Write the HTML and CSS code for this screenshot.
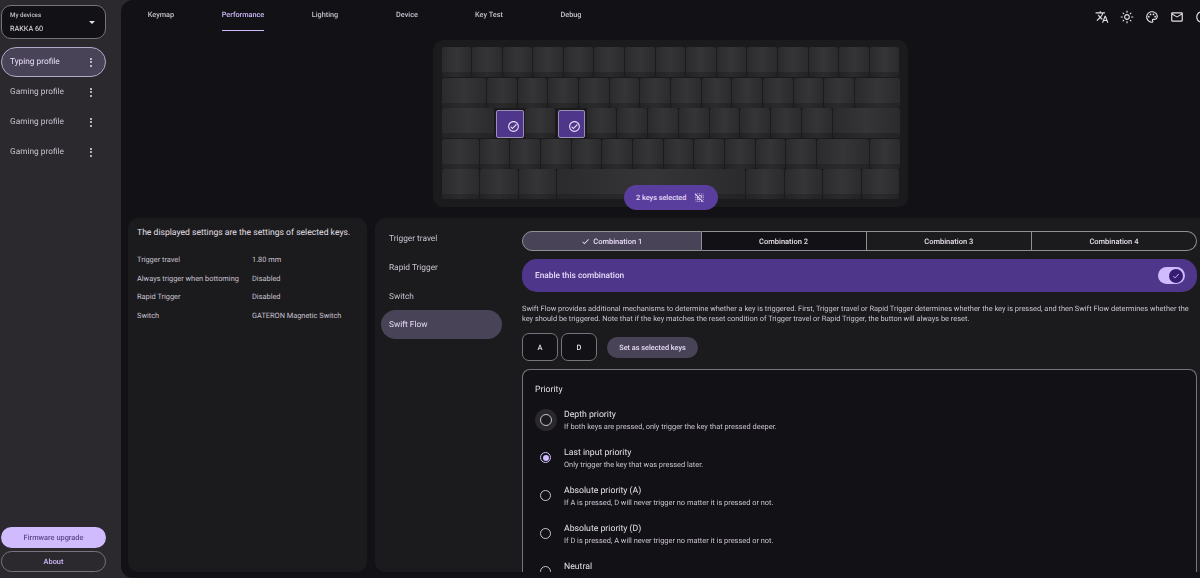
FILE: index.html
```html
<!DOCTYPE html>
<html>
    <head>
        <meta charset="utf-8">
        <title>Performance</title>
        <link rel="stylesheet" href="styles.css">
    </head>
    <body>
        <aside class="sidebar">
            <div class="device">
                <div>
                    <div class="device-label">My devices</div>
                    <div class="device-name">RAKKA 60</div>
                </div>
                <span class="caret"></span>
            </div>
            <ul class="profiles">
                <li class="profile active"><span>Typing profile</span><span class="dots"><i></i><i></i><i></i></span></li>
                <li class="profile"><span>Gaming profile</span><span class="dots"><i></i><i></i><i></i></span></li>
                <li class="profile"><span>Gaming profile</span><span class="dots"><i></i><i></i><i></i></span></li>
                <li class="profile"><span>Gaming profile</span><span class="dots"><i></i><i></i><i></i></span></li>
            </ul>
            <button class="btn-upgrade">Firmware upgrade</button>
            <button class="btn-about">About</button>
        </aside>

        <main class="main">
            <header class="topbar">
                <nav class="tabs">
                    <a class="tab"><span>Keymap</span></a>
                    <a class="tab active"><span>Performance</span></a>
                    <a class="tab"><span>Lighting</span></a>
                    <a class="tab"><span>Device</span></a>
                    <a class="tab"><span>Key Test</span></a>
                    <a class="tab"><span>Debug</span></a>
                </nav>
                <div class="top-icons">
                    <svg viewBox="0 0 24 24"><path d="M12.87 15.07l-2.54-2.51.03-.03c1.74-1.94 2.98-4.17 3.71-6.53H17V4h-7V2H8v2H1v1.99h11.17C11.5 7.92 10.44 9.75 9 11.35 8.07 10.32 7.3 9.19 6.69 8h-2c.73 1.63 1.73 3.17 2.98 4.56l-5.09 5.02L4 19l5-5 3.11 3.11.76-2.04zM18.5 10h-2L12 22h2l1.12-3h4.75L21 22h2l-4.5-12zm-2.62 7l1.62-4.33L19.12 17h-3.24z"/></svg>
                    <svg viewBox="0 0 24 24"><path d="M12 9c1.65 0 3 1.35 3 3s-1.35 3-3 3-3-1.35-3-3 1.35-3 3-3m0-2c-2.76 0-5 2.24-5 5s2.24 5 5 5 5-2.24 5-5-2.24-5-5-5zM2 13h2c.55 0 1-.45 1-1s-.45-1-1-1H2c-.55 0-1 .45-1 1s.45 1 1 1zm18 0h2c.55 0 1-.45 1-1s-.45-1-1-1h-2c-.55 0-1 .45-1 1s.45 1 1 1zM11 2v2c0 .55.45 1 1 1s1-.45 1-1V2c0-.55-.45-1-1-1s-1 .45-1 1zm0 18v2c0 .55.45 1 1 1s1-.45 1-1v-2c0-.55-.45-1-1-1s-1 .45-1 1zM5.99 4.58c-.39-.39-1.03-.39-1.41 0-.39.39-.39 1.03 0 1.41l1.06 1.06c.39.39 1.03.39 1.41 0s.39-1.03 0-1.41L5.99 4.58zm12.37 12.37c-.39-.39-1.03-.39-1.41 0-.39.39-.39 1.03 0 1.41l1.06 1.06c.39.39 1.03.39 1.41 0 .39-.39.39-1.03 0-1.41l-1.06-1.06zm1.06-10.96c.39-.39.39-1.03 0-1.41-.39-.39-1.03-.39-1.41 0l-1.06 1.06c-.39.39-.39 1.03 0 1.41s1.03.39 1.41 0l1.06-1.06zM7.05 18.36c.39-.39.39-1.03 0-1.41-.39-.39-1.03-.39-1.41 0l-1.06 1.06c-.39.39-.39 1.03 0 1.41s1.03.39 1.41 0l1.06-1.06z"/></svg>
                    <svg viewBox="0 0 24 24"><path d="M12 22C6.49 22 2 17.51 2 12S6.49 2 12 2s10 4.04 10 9c0 3.31-2.69 6-6 6h-1.77c-.28 0-.5.22-.5.5 0 .12.05.23.13.33.41.47.64 1.06.64 1.67 0 1.38-1.12 2.5-2.5 2.5zm0-18c-4.41 0-8 3.59-8 8s3.59 8 8 8c.28 0 .5-.22.5-.5 0-.16-.08-.28-.14-.35-.41-.46-.63-1.05-.63-1.65 0-1.38 1.12-2.5 2.5-2.5H16c2.21 0 4-1.79 4-4 0-3.86-3.59-7-8-7z"/><circle cx="6.5" cy="11.5" r="1.5"/><circle cx="9.5" cy="7.5" r="1.5"/><circle cx="14.5" cy="7.5" r="1.5"/><circle cx="17.5" cy="11.5" r="1.5"/></svg>
                    <svg viewBox="0 0 24 24"><path d="M22 6c0-1.1-.9-2-2-2H4c-1.1 0-2 .9-2 2v12c0 1.1.9 2 2 2h16c1.1 0 2-.9 2-2V6zm-2 0l-8 5-8-5h16zm0 12H4V8l8 5 8-5v10z"/></svg>
                    <svg viewBox="0 0 24 24"><path d="M12 2C6.48 2 2 6.48 2 12s4.48 10 10 10 10-4.48 10-10S17.52 2 12 2zm0 18c-4.41 0-8-3.59-8-8s3.59-8 8-8 8 3.59 8 8-3.59 8-8 8z"/></svg>
                </div>
            </header>

            <section class="keyboard">
                <div class="kb-row">
                    <b class="key"></b><b class="key"></b><b class="key"></b><b class="key"></b><b class="key"></b>
                    <b class="key"></b><b class="key"></b><b class="key"></b><b class="key"></b><b class="key"></b>
                    <b class="key"></b><b class="key"></b><b class="key"></b><b class="key"></b><b class="key"></b>
                </div>
                <div class="kb-row">
                    <b class="key u150"></b><b class="key"></b><b class="key"></b><b class="key"></b><b class="key"></b>
                    <b class="key"></b><b class="key"></b><b class="key"></b><b class="key"></b><b class="key"></b>
                    <b class="key"></b><b class="key"></b><b class="key"></b><b class="key u150"></b>
                </div>
                <div class="kb-row">
                    <b class="key u175"></b>
                    <b class="key selected"><span class="cap"><svg viewBox="0 0 24 24"><path d="M12 2C6.48 2 2 6.48 2 12s4.48 10 10 10 10-4.48 10-10S17.52 2 12 2zm0 18c-4.41 0-8-3.59-8-8s3.59-8 8-8 8 3.59 8 8-3.59 8-8 8zm4.59-12.42L10 14.17l-2.59-2.58L6 13l4 4 8-8z"/></svg></span></b>
                    <b class="key"></b>
                    <b class="key selected"><span class="cap"><svg viewBox="0 0 24 24"><path d="M12 2C6.48 2 2 6.48 2 12s4.48 10 10 10 10-4.48 10-10S17.52 2 12 2zm0 18c-4.41 0-8-3.59-8-8s3.59-8 8-8 8 3.59 8 8-3.59 8-8 8zm4.59-12.42L10 14.17l-2.59-2.58L6 13l4 4 8-8z"/></svg></span></b>
                    <b class="key"></b><b class="key"></b><b class="key"></b><b class="key"></b>
                    <b class="key"></b><b class="key"></b><b class="key"></b><b class="key"></b>
                    <b class="key u225"></b>
                </div>
                <div class="kb-row">
                    <b class="key u125"></b><b class="key"></b><b class="key"></b><b class="key"></b><b class="key"></b>
                    <b class="key"></b><b class="key"></b><b class="key"></b><b class="key"></b><b class="key"></b>
                    <b class="key"></b><b class="key"></b><b class="key u175"></b><b class="key"></b>
                </div>
                <div class="kb-row">
                    <b class="key u125"></b><b class="key u125"></b><b class="key u125"></b><b class="key u625"></b>
                    <b class="key u125"></b><b class="key u125"></b><b class="key u125"></b><b class="key u125"></b>
                </div>
                <div class="selection-chip">
                    <span>2 keys selected</span>
                    <svg viewBox="0 0 24 24"><path d="M3,13h2v-2H3V13z M7,21h2v-2H7V21z M13,3h-2v2h2V3z M19,3v2h2C21,3.9,20.1,3,19,3z M5,21v-2H3C3,20.1,3.9,21,5,21z M3,17h2v-2H3V17z M11,21h2v-2h-2V21z M19,13h2v-2h-2V13z M19,9h2V7h-2V9z M15,5h2V3h-2V5z M7.83,5L7,4.17V3h2v2H7.83z M19.83,17L19,16.17V15h2v2H19.83z M21.19,21.19L2.81,2.81L1.39,4.22L4.17,7H3v2h2V7.83l2,2V17h7.17l2,2H15v2h2v-1.17l2.78,2.78L21.19,21.19z M9,15v-3.17L12.17,15H9z M15,12.17V9h-3.17l-2-2H17v7.17L15,12.17z"/></svg>
                </div>
            </section>

            <div class="panels">
                <section class="panel summary">
                    <h2 class="summary-title">The displayed settings are the settings of selected keys.</h2>
                    <dl class="summary-list">
                        <dt>Trigger travel</dt><dd>1.80 mm</dd>
                        <dt>Always trigger when bottoming</dt><dd>Disabled</dd>
                        <dt>Rapid Trigger</dt><dd>Disabled</dd>
                        <dt>Switch</dt><dd>GATERON Magnetic Switch</dd>
                    </dl>
                </section>

                <section class="panel settings">
                    <ul class="side-nav">
                        <li>Trigger travel</li>
                        <li>Rapid Trigger</li>
                        <li>Switch</li>
                        <li class="active">Swift Flow</li>
                    </ul>
                    <div class="content">
                        <div class="segments">
                            <div class="segment active"><svg viewBox="0 0 24 24"><path d="M9 16.17L4.83 12l-1.42 1.41L9 19 21 7l-1.41-1.41z"/></svg>Combination 1</div>
                            <div class="segment">Combination 2</div>
                            <div class="segment">Combination 3</div>
                            <div class="segment">Combination 4</div>
                        </div>
                        <div class="enable-bar">
                            <span>Enable this combination</span>
                            <span class="toggle"><span class="thumb"><svg viewBox="0 0 24 24"><path d="M9 16.17L4.83 12l-1.42 1.41L9 19 21 7l-1.41-1.41z"/></svg></span></span>
                        </div>
                        <p class="description">Swift Flow provides additional mechanisms to determine whether a key is triggered. First, Trigger travel or Rapid Trigger determines whether the key is pressed, and then Swift Flow determines whether the key should be triggered. Note that if the key matches the reset condition of Trigger travel or Rapid Trigger, the button will always be reset.</p>
                        <div class="key-picks">
                            <div class="key-pick">A</div>
                            <div class="key-pick">D</div>
                            <button class="btn-set">Set as selected keys</button>
                        </div>
                        <div class="priority">
                            <h3 class="priority-title">Priority</h3>
                            <div class="option hover">
                                <span class="radio"></span>
                                <div><div class="option-name">Depth priority</div><div class="option-desc">If both keys are pressed, only trigger the key that pressed deeper.</div></div>
                            </div>
                            <div class="option">
                                <span class="radio on"></span>
                                <div><div class="option-name">Last input priority</div><div class="option-desc">Only trigger the key that was pressed later.</div></div>
                            </div>
                            <div class="option">
                                <span class="radio"></span>
                                <div><div class="option-name">Absolute priority (A)</div><div class="option-desc">If A is pressed, D will never trigger no matter it is pressed or not.</div></div>
                            </div>
                            <div class="option">
                                <span class="radio"></span>
                                <div><div class="option-name">Absolute priority (D)</div><div class="option-desc">If D is pressed, A will never trigger no matter it is pressed or not.</div></div>
                            </div>
                            <div class="option">
                                <span class="radio"></span>
                                <div><div class="option-name">Neutral</div></div>
                            </div>
                        </div>
                    </div>
                </section>
            </div>
        </main>
    </body>
</html>
```

FILE: styles.css
```css
*{box-sizing:border-box;}
html,body{margin:0;width:100%;height:100%;overflow:hidden;}
/* opacity is only there to get plain greyscale text */
body{display:flex;opacity:.999;background:#2b292e;color:#e6e0e9;font-family:Roboto,sans-serif;font-size:8px;text-rendering:geometricPrecision;}
ul,dl,dd,h2,h3,p{margin:0;padding:0;}
ul{list-style:none;}
button{font-family:inherit;text-rendering:inherit;cursor:pointer;}
svg{display:block;fill:currentColor;}

/* sidebar */
.sidebar{width:121px;flex:none;display:flex;flex-direction:column;padding:5px 15px 6px 1px;}
.device{height:34px;display:flex;align-items:center;justify-content:space-between;padding:0 10px 0 8px;background:#131216;border:1px solid #79747e;border-radius:10px;}
.device-label{font-size:6.2px;font-weight:500;color:#cac4d0;line-height:10px;}
.device-name{font-size:7.3px;line-height:12px;margin-top:3px;}
.caret{width:0;height:0;border:3px solid transparent;border-top:3px solid #e6e0e9;border-bottom:0;}
.profiles{flex:1;margin-top:8px;}
.profile{height:30px;display:flex;align-items:center;justify-content:space-between;padding:0 14px 0 9px;font-size:8.3px;color:#cac4d0;border-radius:15px;}
.profile.active{background:#4a4458;border:1px solid #b4a9c8;color:#e8def8;padding-left:8px;padding-right:13px;}
.dots{display:flex;flex-direction:column;gap:1.5px;}
.dots i{width:2px;height:2px;border-radius:50%;background:#e6e0e9;}
.btn-upgrade{height:21px;border:0;border-radius:11px;background:#d0bcff;color:#5d4a8a;font-size:7.4px;font-weight:500;}
.btn-about{height:21px;margin-top:3px;border:1px solid #79747e;border-radius:11px;background:transparent;color:#d0bcff;font-size:7.4px;font-weight:500;}

/* main */
.main{flex:1;min-width:0;display:flex;flex-direction:column;background:#131216;border-radius:12px 0 0 12px;overflow:hidden;}
.topbar{height:40px;flex:none;display:flex;justify-content:space-between;}
.tabs{display:flex;margin-left:-1px;}
.tab{width:82px;display:flex;justify-content:center;font-size:7.3px;font-weight:500;line-height:9px;color:#cac4d0;}
.tab span{height:31px;padding-top:10px;}
.tab.active{color:#d0bcff;}
.tab.active span{border-bottom:1px solid #d0bcff;}
.top-icons{display:flex;gap:11px;padding-top:10px;margin-right:-9px;color:#e6e0e9;}
.top-icons svg{width:14px;height:14px;}

/* keyboard */
.keyboard{position:relative;width:475px;height:167px;flex:none;margin-left:312px;padding:7px 8px;background:#1c1b1e;border-radius:10px;}
.kb-row{display:flex;height:30.6px;}
.key{flex:1 1 0;min-width:0;margin:0 .5px .5px;border-radius:2px;background:linear-gradient(to bottom,rgba(0,0,0,0) 84%,rgba(0,0,0,.18) 84%),linear-gradient(to right,#2c2b2d,#363537 50%,#2c2b2d);}
.u125{flex-grow:1.25;}
.u150{flex-grow:1.5;}
.u175{flex-grow:1.75;}
.u225{flex-grow:2.25;}
.u625{flex-grow:6.25;}
.key.selected{display:flex;background:none;}
.cap{flex:1;display:flex;align-items:flex-end;justify-content:flex-end;margin:1.5px .5px 0 1.5px;padding:0 3px 4px 0;background:#4f378b;border:1px solid #9a8fb5;border-radius:2px;color:#e8def8;}
.cap svg{width:13px;height:13px;}
.selection-chip{position:absolute;left:191px;top:145px;width:94px;height:25px;display:flex;align-items:center;gap:8px;padding-left:12px;background:#5b3f9e;border-radius:13px;color:#e8def8;font-size:7.3px;font-weight:500;}
.selection-chip svg{width:11px;height:11px;}

/* panels */
.panels{flex:1;min-height:0;display:flex;gap:8px;margin:11px 0 6px 7px;}
.panel{background:#1c1b1e;border-radius:10px;}
.summary{width:239px;flex:none;padding:10px 9px;opacity:.999;}
.summary-title{font-size:8.6px;font-weight:400;line-height:11px;color:#e6e0e9;}
.summary-list{display:grid;grid-template-columns:115px 1fr;grid-auto-rows:18.6px;margin-top:12px;font-size:7.4px;line-height:18.6px;color:#cac4d0;}
.settings{flex:1;min-width:0;display:flex;overflow:hidden;border-radius:10px 0 0 10px;}
.side-nav{width:127px;flex:none;padding:6px 0 0 6px;font-size:8.3px;color:#cac4d0;}
.side-nav li{height:28.8px;line-height:30px;padding-left:8px;border-radius:15px;}
.side-nav li.active{background:#4a4458;color:#e8def8;}
.content{flex:1;min-width:0;padding:13px 3px 0 20px;}

.segments{display:flex;height:20px;}
.segment{flex:1;display:flex;align-items:center;justify-content:center;gap:3px;font-size:7.5px;font-weight:500;color:#e6e0e9;background:#1c1b1e;border:1px solid #938f99;border-left:0;}
.segment:nth-child(2){background:#131216;}
.segment:first-child{flex:0 0 179.5px;border-left:1px solid #938f99;border-radius:10px 0 0 10px;}
.segment:last-child{border-radius:0 10px 10px 0;}
.segment.active{background:#4a4458;color:#e8def8;}
.segment svg{width:9px;height:9px;}
.enable-bar{height:33px;margin-top:8px;display:flex;align-items:center;justify-content:space-between;padding:0 12px 0 13px;background:#4f378b;border-radius:15px;font-size:8.3px;font-weight:500;color:#e8def8;}
.toggle{width:27px;height:17px;display:flex;justify-content:flex-end;align-items:center;padding-right:2px;background:#d0bcff;border-radius:9px;}
.thumb{width:14px;height:14px;display:flex;align-items:center;justify-content:center;background:#381e72;border-radius:50%;color:#e8def8;}
.thumb svg{width:8px;height:8px;}
.description{margin-top:12px;font-size:7.42px;line-height:10px;color:#cac4d0;}
.key-picks{display:flex;align-items:center;margin-top:9px;}
.key-pick{width:36px;height:28px;display:flex;align-items:center;justify-content:center;margin-right:3px;border:1px solid #79747e;border-radius:7px;background:#131216;font-size:7.5px;font-weight:500;}
.btn-set{width:91px;height:21px;margin-left:7px;border:0;border-radius:11px;background:#4a4458;color:#e8def8;font-size:7.3px;font-weight:500;}

.priority{margin-top:8px;padding:15px 12px;border:1px solid #79747e;border-bottom:0;border-radius:8px 8px 0 0;background:#131216;}
.priority-title{font-size:8.7px;font-weight:400;line-height:11px;color:#e6e0e9;}
.option{display:flex;align-items:flex-start;height:38px;}
.priority-title + .option{margin-top:14px;}
.option-name{font-size:8.7px;line-height:11px;color:#e6e0e9;}
.option-desc{font-size:7.42px;line-height:11px;color:#cac4d0;}
.radio{position:relative;width:11px;height:11px;flex:none;margin:4px 13px 0 5px;border:1.5px solid #cac4d0;border-radius:50%;}
.option.hover .radio::before{content:"";position:absolute;inset:-6.5px;border-radius:50%;background:#2b292e;}
.option.hover .radio::after{content:"";position:absolute;inset:-1.5px;border:1.5px solid #cac4d0;border-radius:50%;background:#1c1b1e;}
.radio.on{border-color:#d0bcff;}
.radio.on::after{content:"";position:absolute;inset:1.5px;border-radius:50%;background:#d0bcff;}
```
